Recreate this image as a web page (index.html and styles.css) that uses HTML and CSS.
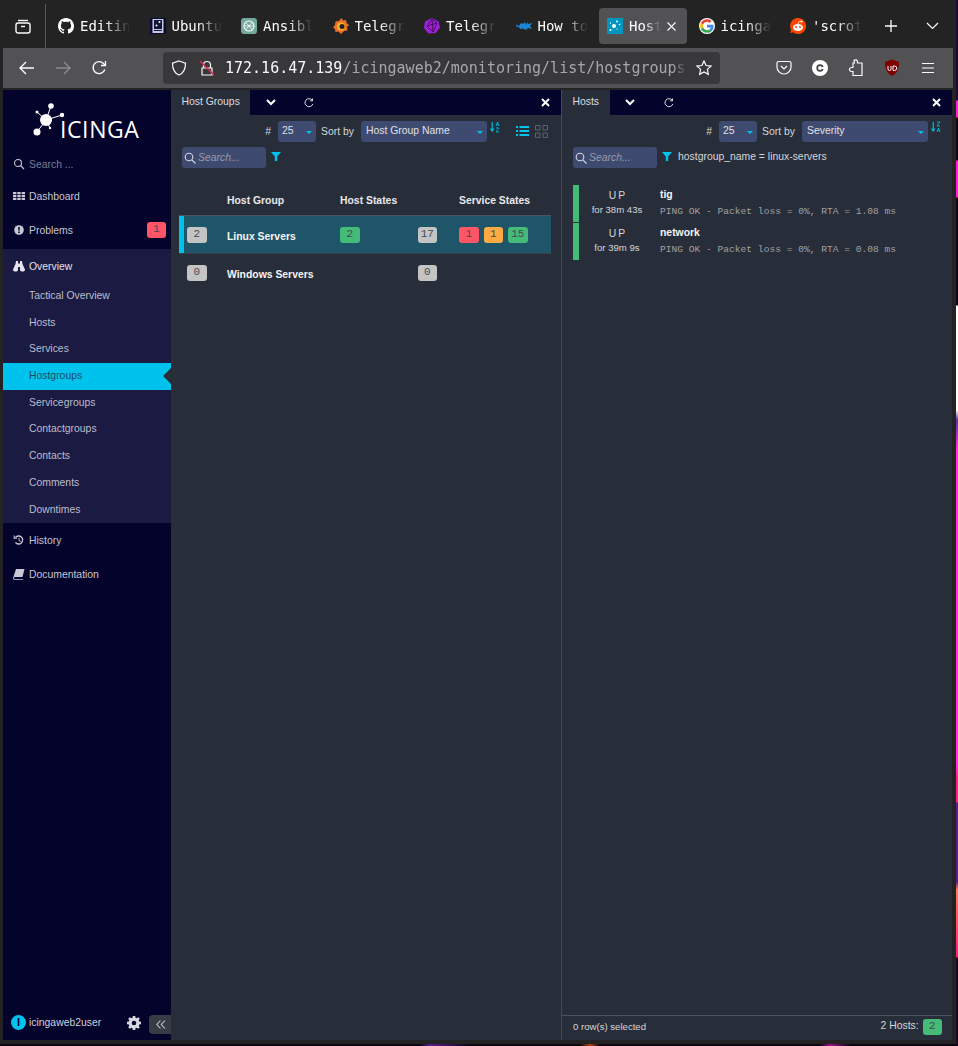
FILE: index.html
```html
<!DOCTYPE html>
<html lang="en">
<head>
    <meta charset="UTF-8">
    <meta name="viewport" content="width=device-width, initial-scale=1.0">
    <title>Icinga Web 2 - Host Groups</title>
    <link rel="stylesheet" href="styles.css">
</head>
<body>
    <div class="browser">
        <div class="tabbar">
            <div class="tab-list-all">
                <svg width="16" height="16" viewBox="0 0 16 16" fill="none" stroke="#fbfbfe" stroke-width="1.4"><path d="M3 2.5h10"/><rect x="1" y="5" width="14" height="10" rx="2"/><path d="M6 8.5h4"/></svg>
            </div>
            <div class="tab">
                <svg class="favicon" viewBox="0 0 16 16"><path fill="#fff" d="M8 0C3.58 0 0 3.58 0 8c0 3.54 2.29 6.53 5.47 7.59.4.07.55-.17.55-.38 0-.19-.01-.82-.01-1.49-2.01.37-2.53-.49-2.69-.94-.09-.23-.48-.94-.82-1.13-.28-.15-.68-.52-.01-.53.63-.01 1.08.58 1.23.82.72 1.21 1.87.87 2.33.66.07-.52.28-.87.51-1.07-1.78-.2-3.64-.89-3.64-3.95 0-.87.31-1.59.82-2.15-.08-.2-.36-1.02.08-2.12 0 0 .67-.21 2.2.82.64-.18 1.32-.27 2-.27.68 0 1.36.09 2 .27 1.53-1.04 2.2-.82 2.2-.82.44 1.1.16 1.92.08 2.12.51.56.82 1.27.82 2.15 0 3.07-1.87 3.75-3.65 3.95.29.25.54.73.54 1.48 0 1.07-.01 1.93-.01 2.2 0 .21.15.46.55.38A8.013 8.013 0 0016 8c0-4.42-3.58-8-8-8z"/></svg>
                <span class="tab-title">Editing</span>
            </div>
            <div class="tab">
                <svg class="favicon" viewBox="0 0 16 16"><rect width="16" height="16" fill="#0b0b3a"/><rect x="2.5" y="1" width="11" height="14" fill="#c9c9e0"/><rect x="4" y="2" width="8" height="9" fill="#14143c"/><circle cx="9.5" cy="4" r="1" fill="#fff"/><circle cx="6.5" cy="7.5" r="1" fill="#fff"/><path d="M4 12.5h8" stroke="#14143c"/></svg>
                <span class="tab-title">Ubuntu</span>
            </div>
            <div class="tab">
                <svg class="favicon" viewBox="0 0 16 16"><rect width="16" height="16" rx="3" fill="#74aa9c"/><circle cx="8" cy="8" r="5" fill="none" stroke="#fff" stroke-width="1.1"/><path d="M5 4.500l6 7M11 4.500l-6 7M3.500 8h9" stroke="#fff" stroke-width=".8"/></svg>
                <span class="tab-title">Ansible</span>
            </div>
            <div class="tab">
                <svg class="favicon" viewBox="0 0 16 16"><path d="M8.500 0l1.500 2.500 3-.5.500 3 2.500 2-2 2 .5 3.500-3.500.5L8 16l-2.500-2.500-3 .5-.5-3L0 9.500 2 7 2.500 3.500 6 3z" fill="#f0702a"/><circle cx="8" cy="8.500" r="4" fill="#f9b233"/><circle cx="9" cy="8.500" r="2.500" fill="#232323"/></svg>
                <span class="tab-title">Telegraf</span>
            </div>
            <div class="tab">
                <svg class="favicon" viewBox="0 0 16 16"><path d="M8 0l6.500 3.500L16 9.500 11.500 15l-7 .5L0 10l1-6.500z" fill="#a020d8"/><path d="M8 1L3 8l6 6 4-9zM3 8l10-3M9 14L8 1" fill="none" stroke="#3c0b5a" stroke-width=".9"/></svg>
                <span class="tab-title">Telegram</span>
            </div>
            <div class="tab">
                <svg class="favicon" viewBox="0 0 16 16"><path d="M0 6.500L3 8l2-3 2 1 2-2 1 3 1-3 1 2 4-1-2 3 2 3-4-1-2 2-3-1.500L4 11 3 9 .5 9z" fill="#1b86d6"/></svg>
                <span class="tab-title">How to</span>
            </div>
            <div class="tab tab-active">
                <svg class="favicon" viewBox="0 0 16 16"><rect width="16" height="16" fill="#0095bf"/><circle cx="7" cy="8" r="2" fill="#fff"/><circle cx="10" cy="3.500" r="1" fill="#fff"/><circle cx="12.500" cy="6.500" r=".8" fill="#fff"/><circle cx="3.500" cy="5" r=".7" fill="#fff"/><circle cx="3.500" cy="12" r="1.100" fill="#fff"/><circle cx="10" cy="11" r=".6" fill="#fff"/></svg>
                <span class="tab-title">Hosts</span>
                <svg width="9" height="9" viewBox="0 0 9 9" stroke="#fbfbfe" stroke-width="1.1"><path d="M.5 .5l8 8M8.500 .5l-8 8"/></svg>
            </div>
            <div class="tab">
                <svg class="favicon" viewBox="-4 -4 56 56"><circle cx="24" cy="24" r="28" fill="#fff"/><path fill="#EA4335" d="M24 9.500c3.540 0 6.710 1.220 9.210 3.600l6.850-6.850C35.900 2.380 30.470 0 24 0 14.620 0 6.510 5.380 2.560 13.220l7.980 6.190C12.430 13.720 17.740 9.500 24 9.500z"/><path fill="#4285F4" d="M46.980 24.550c0-1.570-.15-3.090-.38-4.550H24v9.020h12.940c-.58 2.960-2.260 5.480-4.780 7.180l7.730 6c4.510-4.180 7.090-10.360 7.090-17.650z"/><path fill="#FBBC05" d="M10.530 28.590c-.48-1.450-.76-2.990-.76-4.590s.27-3.140.76-4.590l-7.980-6.190C.92 16.460 0 20.120 0 24c0 3.880.92 7.540 2.560 10.780l7.970-6.190z"/><path fill="#34A853" d="M24 48c6.480 0 11.930-2.130 15.890-5.810l-7.730-6c-2.150 1.450-4.920 2.300-8.160 2.300-6.260 0-11.570-4.220-13.470-9.910l-7.980 6.190C6.510 42.620 14.620 48 24 48z"/></svg>
                <span class="tab-title">icinga</span>
            </div>
            <div class="tab">
                <svg class="favicon" viewBox="0 0 16 16"><path d="M8 0a8 8 0 1 1-5 14.200L0 15l1.200-3A8 8 0 0 1 8 0z" fill="#ff4500"/><ellipse cx="8" cy="9.500" rx="5" ry="3.500" fill="#fff"/><circle cx="6" cy="9" r="1" fill="#ff4500"/><circle cx="10" cy="9" r="1" fill="#ff4500"/><circle cx="11.500" cy="3.500" r="1.100" fill="#fff"/><path d="M8 6l1-2.500h2.500" stroke="#fff" stroke-width=".7" fill="none"/></svg>
                <span class="tab-title">'scrot</span>
            </div>
            <div class="tab-new">
                <svg width="12" height="12" viewBox="0 0 12 12" stroke="#fbfbfe" stroke-width="1.3"><path d="M6 0v12M0 6h12"/></svg>
            </div>
            <div class="tab-more">
                <svg width="13" height="8" viewBox="0 0 13 8" fill="none" stroke="#fbfbfe" stroke-width="1.2"><path d="M1 1l5.500 5.500L12 1"/></svg>
            </div>
        </div>

        <div class="navbar">
            <div class="nav-btn">
                <svg width="16" height="14" viewBox="0 0 16 14" fill="none" stroke="#fbfbfe" stroke-width="1.4"><path d="M15 7H1.500M7 1L1 7l6 6"/></svg>
            </div>
            <div class="nav-btn">
                <svg width="16" height="14" viewBox="0 0 16 14" fill="none" stroke="#8c8c8f" stroke-width="1.4"><path d="M1 7h13.500M9 1l6 6-6 6"/></svg>
            </div>
            <div class="nav-btn">
                <svg width="16" height="16" viewBox="0 0 16 16" fill="none" stroke="#fbfbfe" stroke-width="1.4"><path d="M13.800 9.500A6 6 0 1 1 12.500 3.500L14.500 5.500"/><path d="M14.500 1v4.500H10" stroke-width="1.3"/></svg>
            </div>
            <div class="urlbar">
                <svg width="16" height="16" viewBox="0 0 16 16" fill="none" stroke="#fbfbfe" stroke-width="1.2"><path d="M8 1l6.500 2.200c0 6-2 10-6.500 11.800C3.500 13.200 1.500 9.200 1.500 3.200z"/></svg>
                <svg class="url-lock" width="16" height="16" viewBox="0 0 16 16" fill="none" stroke-width="1.2"><path stroke="#fbfbfe" d="M4.500 8V5a3.500 3.500 0 0 1 7 0v3M3 8h10v7H3z"/><path stroke="#e22850" stroke-width="1.4" d="M1 1l14 14"/></svg>
                <span class="url-text"><span class="url-host">172.16.47.139</span>/icingaweb2/monitoring/list/hostgroups?</span>
                <svg class="url-star" width="16" height="16" viewBox="0 0 16 16" fill="none" stroke="#fbfbfe" stroke-width="1.2"><path d="M8 1l2.100 4.500 4.900.6-3.600 3.300.9 4.900L8 11.900l-4.300 2.400.9-4.900L1 6.100l4.900-.6z"/></svg>
            </div>
            <div class="nav-tools">
                <svg width="16" height="16" viewBox="0 0 16 16" fill="none" stroke="#fbfbfe" stroke-width="1.2"><path d="M1 3a1.500 1.500 0 0 1 1.500-1.500h11A1.500 1.500 0 0 1 15 3v4a7 7 0 0 1-14 0z"/><path d="M5 6l3 3 3-3"/></svg>
                <svg width="16" height="16" viewBox="0 0 16 16"><circle cx="8" cy="8" r="8" fill="#fff"/><circle cx="8" cy="8" r="2.800" fill="none" stroke="#444" stroke-width="1.7"/><path d="M9.500 7h3v2h-3z" fill="#fff"/></svg>
                <svg width="16" height="18" viewBox="0 0 16 18" fill="none" stroke="#fbfbfe" stroke-width="1.2"><path d="M6 1.500a2 2 0 0 1 3.500 1.200V4H14v12.500H5v-4H3.500a2 2 0 0 1 0-4H5V4h1.500z"/></svg>
                <svg width="16" height="18" viewBox="0 0 16 18"><path d="M8 .5l7 2.500c0 7-2 11.500-7 14C3 14.500 1 10 1 3z" fill="#800000"/><path d="M4 7v3a1.500 1.500 0 0 0 3 0V7M9 7h1.500a2 2 0 0 1 0 4.500H9z" fill="none" stroke="#fff"/></svg>
                <svg width="14" height="12" viewBox="0 0 14 12" stroke="#fbfbfe" stroke-width="1.2"><path d="M1 1.500h12M1 6h12M1 10.500h12"/></svg>
            </div>
        </div>

        <div class="app">
            <aside class="sidebar">
                <div class="logo">
                    <svg width="108" height="44" viewBox="0 0 108 44">
                        <g stroke="#fff">
                            <path d="M14 24L19 10M14 24L30 19M14 24L5 16M14 24L5 36M14 24L18 32"/>
                        </g>
                        <g fill="#fff">
                            <circle cx="14" cy="24" r="6"/>
                            <circle cx="19" cy="10" r="2.800"/>
                            <circle cx="30" cy="19" r="2.200"/>
                            <circle cx="5" cy="16" r="1.500"/>
                            <circle cx="5" cy="36" r="3.500"/>
                            <circle cx="18" cy="32" r="1.200"/>
                        </g>
                        <text x="28" y="42" class="logo-text">ICINGA</text>
                    </svg>
                </div>
                <div class="nav-search">
                    <svg class="nav-icon" viewBox="0 0 12 12" fill="none" stroke="#c8c8d4" stroke-width="1.1"><circle cx="5" cy="5" r="3.500"/><path d="M7.500 7.500L11 11"/></svg>
                    <span>Search ...</span>
                </div>
                <ul class="menu">
                    <li class="menu-item">
                        <svg class="nav-icon" viewBox="0 0 12 12" fill="#c8c8d4"><path d="M0 2h3.400v2.200H0zM4.300 2h3.400v2.200H4.300zM8.600 2H12v2.200H8.600zM0 4.900h3.400v2.200H0zM4.300 4.900h3.400v2.200H4.300zM8.600 4.900H12v2.200H8.600zM0 7.800h3.400V10H0zM4.300 7.800h3.400V10H4.300zM8.600 7.800H12V10H8.600z"/></svg>
                        Dashboard
                    </li>
                    <li class="menu-item">
                        <svg class="nav-icon" viewBox="0 0 12 12"><circle cx="6" cy="6" r="4.800" fill="#c8c8d4"/><path d="M5.200 3h1.600l-.2 3.800H5.400zM5.200 7.500h1.600V9H5.200z" fill="#03032b"/></svg>
                        Problems
                        <span class="badge badge-critical menu-badge">1</span>
                    </li>
                    <li class="menu-section">
                        <div class="menu-item menu-open">
                            <svg class="nav-icon" viewBox="0 0 12 12" fill="#e4e4ec"><path d="M3 1h2v2.500h2V1h2l.5 3L12 9.500c0 1.500-1 2-2.500 2s-2.500-.5-2.500-2V7H5v2.500c0 1.500-1 2-2.500 2S0 11 0 9.500L2.500 4z"/></svg>
                            Overview
                        </div>
                        <ul class="submenu">
                            <li>Tactical Overview</li>
                            <li>Hosts</li>
                            <li>Services</li>
                            <li class="active">Hostgroups</li>
                            <li>Servicegroups</li>
                            <li>Contactgroups</li>
                            <li>Contacts</li>
                            <li>Comments</li>
                            <li>Downtimes</li>
                        </ul>
                    </li>
                    <li class="menu-item">
                        <svg class="nav-icon" viewBox="0 0 12 12" fill="none" stroke="#c8c8d4" stroke-width="1.3"><path d="M2.500 3.500A4 4 0 1 1 2.500 8.500"/><path d="M6 3.800V6.500L7.800 7.500" stroke-width="1"/><path d="M1.200 1.500v2.800H4" stroke-width="1.1"/></svg>
                        History
                    </li>
                    <li class="menu-item">
                        <svg class="nav-icon" viewBox="0 0 12 12" fill="#c8c8d4"><path d="M3 1h8.500L9.500 9H1.800C.8 9 .8 11 1.800 11H10v.7H1.500C.2 11.700 0 10.300.4 9z"/></svg>
                        Documentation
                    </li>
                </ul>
                <div class="sidebar-footer">
                    <span class="avatar">I</span>
                    <span class="username">icingaweb2user</span>
                    <svg class="gear" width="14" height="14" viewBox="0 0 14 14"><path fill="#d8d8e0" fill-rule="evenodd" d="M5.800 0h2.400l.3 1.800 1.200.5 1.500-1.100 1.600 1.600-1.100 1.500.5 1.200 1.800.3v2.400l-1.800.3-.5 1.200 1.100 1.500-1.600 1.600-1.500-1.100-1.200.5-.3 1.800H5.800l-.3-1.800-1.200-.5-1.500 1.100-1.600-1.600 1.100-1.500-.5-1.200L0 8.200V5.800l1.800-.3.500-1.200-1.100-1.500 1.600-1.600 1.500 1.100 1.200-.5zM7 4.700a2.300 2.300 0 1 0 0 4.600 2.300 2.300 0 0 0 0-4.600z"/></svg>
                    <div class="collapse-btn">
                        <svg width="10" height="9" viewBox="0 0 10 9" fill="none" stroke="#c8c8d0" stroke-width="1.1"><path d="M4.500 .5L.8 4.500l3.700 4M9 .5L5.300 4.500 9 8.500"/></svg>
                    </div>
                </div>
            </aside>

            <section class="col">
                <div class="col-tabs">
                    <div class="col-tab">Host Groups</div>
                    <div class="col-tab-btn">
                        <svg width="10" height="7" viewBox="0 0 10 7" fill="none" stroke="#fff" stroke-width="2"><path d="M1 1l4 4 4-4"/></svg>
                    </div>
                    <div class="col-tab-btn">
                        <svg width="10" height="10" viewBox="0 0 10 10" fill="none" stroke="#e0e0e0"><path d="M8.800 6a4 4 0 1 1-.8-4"/><path d="M8.500 .5v2.300H6.200"/></svg>
                    </div>
                    <div class="col-close">
                        <svg width="9" height="9" viewBox="0 0 9 9" stroke="#fff" stroke-width="2"><path d="M1 1l7 7M8 1L1 8"/></svg>
                    </div>
                </div>
                <div class="controls">
                    <span class="ctl-hash">#</span>
                    <div class="select select-limit">25<span class="caret"></span></div>
                    <span class="ctl-label">Sort by</span>
                    <div class="select select-sort">Host Group Name<span class="caret"></span></div>
                    <svg class="sort-icon" width="10" height="12" viewBox="0 0 10 12"><path d="M2.200 1v8M.5 7.500l1.700 2.500 1.700-2.500" fill="none" stroke="#00c3ed" stroke-width="1.1"/><path d="M6 5l1.500-4L9 5M6.500 3.600h2" fill="none" stroke="#00c3ed" stroke-width=".8"/><path d="M6 7h3L6 11h3" fill="none" stroke="#00c3ed" stroke-width=".8"/></svg>
                    <svg class="view-list" width="13" height="11" viewBox="0 0 13 11" fill="#00c3ed"><path d="M0 0h2v2H0zM3.500 0H13v2H3.500zM0 4h2v2H0zM3.500 4H13v2H3.500zM0 8h2v2H0zM3.500 8H13v2H3.500z"/></svg>
                    <svg class="view-grid" width="13" height="13" viewBox="0 0 13 13" fill="none" stroke="#5c616b"><path d="M.5 .5H5V5H.5zM8 .5h4.500V5H8zM.5 8H5v4.500H.5zM8 8h4.500v4.500H8z"/></svg>
                </div>
                <div class="search-row">
                    <div class="search-box">
                        <svg width="12" height="12" viewBox="0 0 12 12" fill="none" stroke="#d8d8e0" stroke-width="1.1"><circle cx="5" cy="5" r="3.800"/><path d="M7.800 7.800l3.700 3.700"/></svg>
                        <span>Search...</span>
                    </div>
                    <svg class="filter-icon" width="10" height="9" viewBox="0 0 10 9" fill="#00c3ed"><path d="M0 0h10L6.200 4.500V9H3.800V4.500z"/></svg>
                </div>
                <div class="group-table">
                    <div class="group-row group-head">
                        <div></div>
                        <div>Host Group</div>
                        <div>Host States</div>
                        <div>Service States</div>
                    </div>
                    <div class="group-row selected">
                        <div><span class="badge badge-none">2</span></div>
                        <div class="group-name">Linux Servers</div>
                        <div class="state-cell">
                            <span class="badge badge-ok">2</span>
                            <span class="badge badge-none badge-total">17</span>
                        </div>
                        <div class="badge-list">
                            <span class="badge badge-critical">1</span>
                            <span class="badge badge-warning">1</span>
                            <span class="badge badge-ok">15</span>
                        </div>
                    </div>
                    <div class="group-row">
                        <div><span class="badge badge-none">0</span></div>
                        <div class="group-name">Windows Servers</div>
                        <div class="state-cell">
                            <span class="badge badge-none badge-total">0</span>
                        </div>
                        <div></div>
                    </div>
                </div>
            </section>

            <section class="col col-right">
                <div class="col-tabs">
                    <div class="col-tab">Hosts</div>
                    <div class="col-tab-btn">
                        <svg width="10" height="7" viewBox="0 0 10 7" fill="none" stroke="#fff" stroke-width="2"><path d="M1 1l4 4 4-4"/></svg>
                    </div>
                    <div class="col-tab-btn">
                        <svg width="10" height="10" viewBox="0 0 10 10" fill="none" stroke="#e0e0e0"><path d="M8.800 6a4 4 0 1 1-.8-4"/><path d="M8.500 .5v2.300H6.200"/></svg>
                    </div>
                    <div class="col-close">
                        <svg width="9" height="9" viewBox="0 0 9 9" stroke="#fff" stroke-width="2"><path d="M1 1l7 7M8 1L1 8"/></svg>
                    </div>
                </div>
                <div class="controls">
                    <span class="ctl-hash">#</span>
                    <div class="select select-limit">25<span class="caret"></span></div>
                    <span class="ctl-label">Sort by</span>
                    <div class="select select-sort">Severity<span class="caret"></span></div>
                    <svg class="sort-icon" width="10" height="12" viewBox="0 0 10 12"><path d="M2.200 1v8M.5 7.500l1.700 2.500 1.700-2.500" fill="none" stroke="#00c3ed" stroke-width="1.1"/><path d="M6 1h3L6 5h3" fill="none" stroke="#00c3ed" stroke-width=".8"/><path d="M6 11l1.500-4L9 11M6.500 9.600h2" fill="none" stroke="#00c3ed" stroke-width=".8"/></svg>
                </div>
                <div class="search-row">
                    <div class="search-box">
                        <svg width="12" height="12" viewBox="0 0 12 12" fill="none" stroke="#d8d8e0" stroke-width="1.1"><circle cx="5" cy="5" r="3.800"/><path d="M7.800 7.800l3.700 3.700"/></svg>
                        <span>Search...</span>
                    </div>
                    <svg class="filter-icon" width="10" height="9" viewBox="0 0 10 9" fill="#00c3ed"><path d="M0 0h10L6.200 4.500V9H3.800V4.500z"/></svg>
                    <span class="filter-text">hostgroup_name = linux-servers</span>
                </div>
                <div class="host-list">
                    <div class="host-row">
                        <div class="host-state"><span class="state-name">UP</span><span>for 38m 43s</span></div>
                        <div class="host-info"><strong>tig</strong><span class="plugin-output">PING OK - Packet loss = 0%, RTA = 1.08 ms</span></div>
                    </div>
                    <div class="host-row">
                        <div class="host-state"><span class="state-name">UP</span><span>for 39m 9s</span></div>
                        <div class="host-info"><strong>network</strong><span class="plugin-output">PING OK - Packet loss = 0%, RTA = 0.08 ms</span></div>
                    </div>
                </div>
                <div class="col-footer">
                    <span class="row-count">0 row(s) selected</span>
                    <span class="footer-count">2 Hosts: <span class="badge badge-ok">2</span></span>
                </div>
            </section>
        </div>
    </div>
</body>
</html>
```

FILE: styles.css
```css
* {
    margin: 0;
    padding: 0;
    box-sizing: border-box;
}

body {
    width: 958px;
    height: 1046px;
    overflow: hidden;
    font-family: "Liberation Sans", Arial, sans-serif;
    font-size: 10.4px;
    background-color: #0c0612;
    background-image:
        linear-gradient(to bottom, #1a0a30 0, #1a0a30 100px, #ff20d8 101px, #ff20d8 117px, #100818 118px, #100818 160px, #ff20d8 161px, #ff20d8 197px, #100818 198px, #100818 305px, #ffffff 306px, #ffffff 410px, #6030a0 420px, #ff30e0 450px, #ff30e0 765px, #ff2090 778px, #ff2090 802px, #5a1a90 803px, #5a1a90 882px, #ff8050 890px, #ff2080 957px, #1a0a20 958px),
        linear-gradient(to right, #0c0612 0, #0c0612 420px, #5a1a90 430px, #0c0612 470px, #0c0612 580px, #b04010 590px, #0c0612 600px, #0c0612 820px, #a0108a 830px, #0c0612 850px);
    background-size: 2px 100%, 100% 2px;
    background-position: 956px 0, 0 1044px;
    background-repeat: no-repeat;
}

ul {
    list-style: none;
}

.browser {
    width: 956px;
    height: 1044px;
    background: #232323;
    display: flex;
    flex-direction: column;
}

/* browser chrome */
.tabbar {
    height: 48px;
    padding-top: 4px;
    display: flex;
    align-items: center;
    font-family: "DejaVu Sans Mono", monospace;
    font-size: 14px;
    color: #fbfbfe;
    flex-shrink: 0;
}

.tab-list-all {
    width: 46px;
    height: 44px;
    margin-right: 4px;
    padding-left: 15px;
    display: flex;
    align-items: center;
    border-right: 1px solid #5a5a5a;
    flex-shrink: 0;
}

.tab {
    width: 91.5px;
    height: 36px;
    padding-left: 8px;
    display: flex;
    align-items: center;
    gap: 6px;
    flex-shrink: 0;
    border-radius: 4px;
}

.tab-active {
    width: 88px;
    margin-right: 3.5px;
    background: #525254;
}

.favicon {
    width: 16px;
    height: 16px;
    flex-shrink: 0;
}

.tab-title {
    width: 50px;
    overflow: hidden;
    white-space: nowrap;
    -webkit-mask-image: linear-gradient(to right, #000 50%, transparent 100%);
    mask-image: linear-gradient(to right, #000 50%, transparent 100%);
}

.tab-active .tab-title {
    width: 32px;
}

.tab-new {
    margin-left: 11px;
    width: 12px;
    display: flex;
}

.tab-more {
    margin-left: 29px;
    width: 13px;
    display: flex;
}

.navbar {
    height: 40px;
    margin: 0 3px 2px;
    background: #525254;
    display: flex;
    align-items: center;
    flex-shrink: 0;
}

.nav-btn {
    width: 36px;
    display: flex;
    justify-content: center;
    flex-shrink: 0;
}

.nav-btn:first-child {
    margin-left: 6px;
}

.urlbar {
    width: 557px;
    height: 32px;
    margin-left: 46px;
    background: #38383b;
    border-radius: 4px;
    display: flex;
    align-items: center;
    padding-left: 8px;
    flex-shrink: 0;
}

.url-lock {
    margin-left: 12px;
}

.url-text {
    width: 462px;
    margin-left: 10px;
    overflow: hidden;
    white-space: nowrap;
    font-family: "DejaVu Sans Mono", monospace;
    font-size: 15px;
    color: #a8a8aa;
    -webkit-mask-image: linear-gradient(to right, #000 97%, transparent 100%);
    mask-image: linear-gradient(to right, #000 97%, transparent 100%);
}

.url-host {
    color: #fbfbfe;
}

.url-star {
    margin-left: 9px;
}

.nav-tools {
    display: grid;
    grid-template-columns: repeat(5, 36px);
    justify-items: center;
    align-items: center;
    margin-left: 46px;
}

/* icinga web */
.app {
    flex: 1;
    margin: 0 3px 4px;
    display: flex;
    min-height: 0;
}

.sidebar {
    width: 168px;
    background: #03032b;
    color: #c6c6d2;
    display: flex;
    flex-direction: column;
    flex-shrink: 0;
}

.logo {
    height: 59px;
    padding: 6px 0 0 29px;
}

.logo-text {
    font-family: "Open Sans", sans-serif;
    font-size: 23px;
    fill: #fff;
    letter-spacing: 0.6px;
}

.nav-icon {
    width: 12px;
    height: 12px;
    flex-shrink: 0;
}

.nav-search {
    height: 30px;
    display: flex;
    align-items: center;
    gap: 4px;
    padding-left: 10px;
    color: #7c7c92;
}

.menu-item {
    height: 34px;
    display: flex;
    align-items: center;
    gap: 4px;
    padding-left: 10px;
}

.menu-badge {
    margin-left: auto;
    margin-right: 5px;
}

.menu-section {
    margin-top: 2px;
    background: #1a1a42;
}

.menu-open {
    color: #e4e4ec;
}

.submenu li {
    height: 26.7px;
    line-height: 26.7px;
    padding-left: 26px;
    color: #bdbdcc;
    position: relative;
}

.submenu .active {
    background: #00c3ed;
    color: #1c4d66;
}

.submenu .active::after {
    content: "";
    position: absolute;
    right: 0;
    top: 5px;
    border: 8px solid transparent;
    border-left: 0;
    border-right-color: #282e39;
}

.sidebar-footer {
    margin-top: auto;
    height: 25px;
    margin-bottom: 5px;
    display: flex;
    align-items: center;
    padding-left: 8px;
}

.avatar {
    width: 15px;
    height: 15px;
    border-radius: 50%;
    background: #00c3ed;
    color: #03032b;
    font-weight: bold;
    font-size: 11px;
    text-align: center;
    line-height: 15px;
    flex-shrink: 0;
}

.username {
    margin-left: 3px;
    color: #d0d0da;
}

.gear {
    margin-left: 26px;
}

.collapse-btn {
    margin: 4px 0 0 auto;
    width: 22px;
    height: 19px;
    background: #363b46;
    border-radius: 4px 0 0 4px;
    display: flex;
    align-items: center;
    padding-left: 7px;
}

.col {
    width: 390px;
    background: #282e39;
    color: #d6d6da;
    display: flex;
    flex-direction: column;
    flex-shrink: 0;
}

.col-right {
    width: 391px;
    border-left: 1px solid #454a54;
}

.col-tabs {
    height: 25px;
    background: #03032b;
    display: flex;
    align-items: center;
    flex-shrink: 0;
}

.col-tab {
    height: 25px;
    line-height: 24px;
    padding: 0 10.5px;
    background: #282e39;
    color: #dcdce0;
}

.col-tab-btn {
    width: 40px;
    display: flex;
    justify-content: center;
}

.col-tab + .col-tab-btn {
    width: 41px;
}

.col-tab-btn + .col-tab-btn {
    width: 34px;
    margin-left: 1px;
}

.col-close {
    margin-left: auto;
    margin-right: 11px;
    display: flex;
}

.controls {
    margin-top: 6px;
    height: 21px;
    display: flex;
    justify-content: flex-end;
    align-items: center;
    padding-right: 13px;
}

.col-right .controls {
    padding-right: 11px;
}

.ctl-hash {
    margin-right: 7px;
}

.ctl-label {
    margin: 0 7px 0 5px;
}

.select {
    height: 21px;
    background: #3e4a70;
    border-radius: 3px;
    line-height: 20px;
    padding-left: 4px;
    color: #e0e0e4;
    position: relative;
}

.select-limit {
    width: 38px;
}

.select-sort {
    width: 126px;
    padding-left: 5px;
}

.caret {
    position: absolute;
    right: 4px;
    top: 10px;
    border: 3px solid transparent;
    border-top: 3px solid #00c3ed;
    border-bottom: 0;
}

.sort-icon {
    margin-left: 3px;
    align-self: flex-start;
}

.view-list {
    margin-left: 16px;
}

.view-grid {
    margin-left: 6px;
}

.search-row {
    margin-top: 5px;
    height: 21px;
    padding-left: 11px;
    display: flex;
    align-items: center;
}

.search-box {
    width: 84px;
    height: 21px;
    background: #3e4a70;
    border-radius: 3px;
    display: flex;
    align-items: center;
    gap: 2px;
    padding-left: 2px;
    color: #9a9aa8;
    font-style: italic;
}

.filter-icon {
    margin-left: 5px;
    margin-top: -2px;
}

.filter-text {
    margin-left: 6px;
    margin-top: -2px;
}

.group-table {
    margin: 22px 10px 0 8px;
}

.group-row {
    display: grid;
    grid-template-columns: 48px 113px 119px 92px;
    align-items: center;
    height: 38px;
}

.group-row > :first-child {
    padding-left: 8px;
}

.group-head {
    height: 26px;
    padding-bottom: 4px;
    font-weight: bold;
    color: #e8e8ec;
    border-bottom: 1px solid #4c525e;
}

.selected {
    background: #1f5568;
    box-shadow: inset 5px 0 0 #00c3ed;
    border-bottom: 1px solid #3a404c;
}

.group-name {
    padding-top: 3px;
    font-weight: bold;
    color: #f4f4f6;
}

.state-cell {
    display: flex;
    padding-right: 22px;
}

.badge-total {
    margin-left: auto;
}

.badge-list {
    display: flex;
    gap: 5px;
}

.badge {
    display: inline-block;
    min-width: 19.5px;
    height: 16px;
    padding: 0 3px;
    border-radius: 3px;
    font-family: "Liberation Mono", monospace;
    font-size: 11px;
    line-height: 15px;
    text-align: center;
    color: #444a54;
}

.badge-none {
    background: #c4c4c4;
}

.badge-ok {
    background: #44bb77;
}

.badge-critical {
    background: #ff5566;
}

.badge-warning {
    background: #ffaa44;
}

.host-list {
    margin: 17px 0 0 11px;
    display: flex;
    flex-direction: column;
    gap: 1px;
}

.host-row {
    height: 37px;
    display: flex;
    border-left: 6px solid #44bb77;
}

.host-state {
    width: 76px;
    display: flex;
    flex-direction: column;
    align-items: center;
    padding-top: 5px;
    gap: 3px;
    font-size: 9.6px;
    color: #d6d6da;
}

.state-name {
    padding-left: 2px;
    font-size: 10.4px;
    letter-spacing: 2px;
}

.host-info {
    padding: 4px 0 0 5px;
    display: flex;
    flex-direction: column;
    gap: 6px;
}

.host-info strong {
    color: #f4f4f6;
}

.plugin-output {
    font-family: "Liberation Mono", monospace;
    font-size: 9.6px;
    color: #a0a0a4;
}

.col-footer {
    margin-top: auto;
    height: 25px;
    padding: 0 10px 3px 11px;
    border-top: 1px solid #4c525e;
    display: flex;
    justify-content: space-between;
    align-items: center;
}

.row-count {
    font-size: 9.6px;
}

.footer-count .badge {
    margin-left: 1px;
}
```
